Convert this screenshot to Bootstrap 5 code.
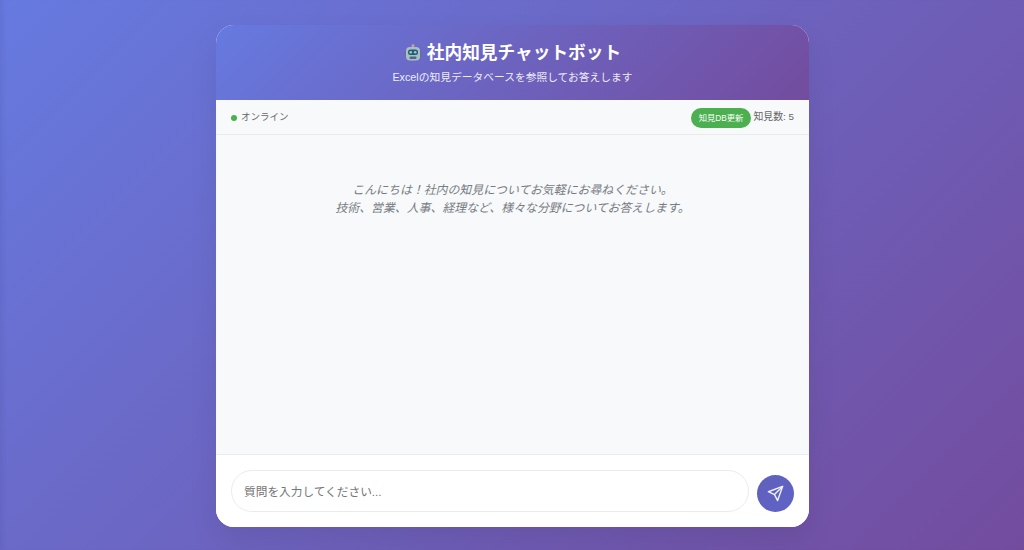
<!DOCTYPE html>
<html lang="ja">
<head>
<meta charset="utf-8">
<title>社内知見チャットボット</title>
<link href="https://cdn.jsdelivr.net/npm/bootstrap@5.3.0/dist/css/bootstrap.min.css" rel="stylesheet">
<style>
html,body{height:550px;overflow:hidden}
body{background:linear-gradient(135deg,#667ae0 0%,#734c9e 100%);font-family:"Liberation Sans","Noto Sans CJK JP",sans-serif;padding-top:25px;box-shadow:inset 6px 0 6px -5px rgba(60,60,130,.18)}
.chat-shell{width:593px;height:502px;border-radius:18px;overflow:hidden;background:#fff;box-shadow:0 14px 30px rgba(0,0,0,.08);margin:0 auto 0 216px}
.chat-head{height:75px;background:linear-gradient(135deg,#667ae0 0%,#734c9e 100%);color:#fff;padding-top:17px}
.chat-title{font-size:17.7px;font-weight:700;line-height:22px;margin:0 0 5px}
.chat-title svg{width:18px;height:18px;vertical-align:-3px;margin-right:5px}
.chat-sub{font-size:10.75px;line-height:16px;opacity:.88;margin:0}
.status-strip{height:35px;padding:1px 15px 0;background:#f8f9fa;border-bottom:1px solid #e9ecef;font-size:9.5px;color:#666}
.status-gap{gap:2px}
.live-dot{width:6px;height:6px;background:#4caf50;border-radius:50%}
.db-btn{height:20px;padding:0 8px;background:#4caf50;color:#fff;border:0;border-radius:10px;font-size:8.3px;line-height:20px;font-family:inherit}
.count-text{font-size:9.9px}
.msg-area{height:319px;background:#f8f9fa;padding-top:46px;color:#767c83;font-style:italic;font-size:11.9px;line-height:18px}
.msg-area p{margin:0}
.input-strip{height:73px;padding:15px;background:#fff;border-top:1px solid #e9ecef}
.ask-input{height:42px;border:1.5px solid #e9ecef;border-radius:21px;padding:0 12px;font-size:11.7px;outline:0;font-family:inherit;color:#333}
.ask-input::placeholder{color:#757575;opacity:1}
.send-btn{width:37px;height:37px;border:0;border-radius:50%;background:linear-gradient(135deg,#6160ba 0%,#5f63c8 100%);padding:0}
</style>
</head>
<body>
<div class="chat-shell d-flex flex-column">
  <header class="chat-head text-center">
    <h1 class="chat-title"><svg viewBox="0 0 36 36" aria-hidden="true"><rect x="16.5" y="1" width="3" height="6" fill="#a8b4ba"/><circle cx="18" cy="3.5" r="3" fill="#c9a09c"/><rect x="1" y="15" width="4" height="10" rx="2" fill="#66757f"/><rect x="31" y="15" width="4" height="10" rx="2" fill="#66757f"/><rect x="4" y="6" width="28" height="27" rx="8" fill="#a5c0c8"/><rect x="8" y="11" width="20" height="11" rx="5" fill="#35566a"/><circle cx="13.5" cy="16.5" r="2.6" fill="#7bd5e8"/><circle cx="22.5" cy="16.5" r="2.6" fill="#7bd5e8"/><rect x="11" y="25" width="14" height="5" rx="2" fill="#4f6b79"/></svg>社内知見チャットボット</h1>
    <p class="chat-sub">Excelの知見データベースを参照してお答えします</p>
  </header>
  <div class="status-strip d-flex align-items-center justify-content-between">
    <div class="d-flex align-items-center gap-1"><span class="live-dot"></span><span>オンライン</span></div>
    <div class="d-flex align-items-center status-gap"><button class="db-btn" type="button">知見DB更新</button><span class="count-text">知見数: 5</span></div>
  </div>
  <div class="msg-area text-center">
    <p>こんにちは！社内の知見についてお気軽にお尋ねください。</p>
    <p>技術、営業、人事、経理など、様々な分野についてお答えします。</p>
  </div>
  <div class="input-strip d-flex align-items-end gap-2">
    <input class="ask-input flex-grow-1" type="text" placeholder="質問を入力してください...">
    <button class="send-btn d-flex align-items-center justify-content-center flex-shrink-0" type="button" aria-label="送信"><svg width="17" height="17" viewBox="0 0 24 24" fill="none" stroke="#eef0fa" stroke-width="2" stroke-linejoin="round" stroke-linecap="round"><path d="M22 2 2 9.5l8.5 4L15 22z"/><path d="M22 2 10.5 13.5"/></svg></button>
  </div>
</div>
</body>
</html>
